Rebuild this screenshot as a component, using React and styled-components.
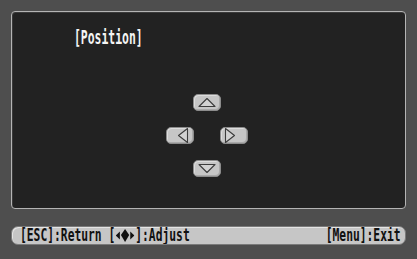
import React from "react";
import styled, { createGlobalStyle } from "styled-components";

const GlobalStyle = createGlobalStyle`
  html, body {
    margin: 0;
    padding: 0;
    background: #4e4e4e;
  }
`;

const Screen = styled.div`
  width: 417px;
  height: 259px;
  box-sizing: border-box;
  padding: 11px 11px 0 11px;
  background: #4e4e4e;
  display: flex;
  flex-direction: column;
  overflow: hidden;
`;

const Panel = styled.div`
  height: 198px;
  box-sizing: border-box;
  background: #222222;
  border: 1px solid #b4b4b4;
  border-radius: 4px;
  box-shadow: inset 1px 1px 0 #3a3a3a;
  padding: 15px 0 0 62px;
  display: flex;
  flex-direction: column;
`;

const Title = styled.h1`
  margin: 0;
  align-self: flex-start;
  font: bold 20px/20px "DejaVu Sans Mono", monospace;
  color: #f4f4f4;
  transform: scaleX(0.57);
  transform-origin: left top;
`;

const Pad = styled.div`
  align-self: center;
  margin: 47px 66px 0 0;
  display: grid;
  grid-template-columns: 27px 27px 27px;
  grid-template-rows: 17px 17px 17px;
  column-gap: 0;
  row-gap: 16px;
`;

const Key = styled.div`
  grid-column: ${(p) => p.col};
  grid-row: ${(p) => p.row};
  width: 28px;
  height: 17px;
  box-sizing: border-box;
  background: #c6c6c6;
  border: 1px solid #8c8c8c;
  border-radius: 5px;
  box-shadow: inset 1px 1px 0 #dcdcdc, inset -1px -1px 0 #a8a8a8;
  display: flex;
  align-items: center;
  justify-content: center;
`;

const Footer = styled.div`
  margin-top: 17px;
  height: 19px;
  box-sizing: border-box;
  background: #c6c6c6;
  border: 1px solid #7a7a7a;
  border-radius: 7px;
  box-shadow: inset 1px 1px 0 #e4e4e4;
  padding: 0 4px 0 8px;
  display: flex;
  align-items: center;
  justify-content: space-between;
  overflow: hidden;
`;

const Hint = styled.span`
  display: inline-flex;
  align-items: center;
  white-space: pre;
  font: bold 17px/17px "DejaVu Sans Mono", monospace;
  color: #111;
  transform: scaleX(0.665);
  transform-origin: ${(p) => (p.right ? "right center" : "left center")};
`;

function Arrow({ dir }) {
  let points;
  if (dir === "up") points = "14,4.5 22,12.5 6,12.5";
  if (dir === "down") points = "14,12.5 22,4.5 6,4.5";
  if (dir === "left") points = "12.5,8.5 21.5,1.5 21.5,15.5";
  if (dir === "right") points = "14.5,8.5 5.5,1.5 5.5,15.5";
  return (
    <svg width="28" height="17" viewBox="0 0 28 17" style={{ margin: "-1px" }}>
      <polygon
        points={points}
        fill="#d2d2d2"
        stroke="#3c3c3c"
        strokeWidth="1.1"
        strokeLinejoin="round"
      />
    </svg>
  );
}

function AdjustGlyph() {
  return (
    <svg
      width="28"
      height="13"
      viewBox="0 0 18 13"
      preserveAspectRatio="none"
      style={{ margin: "0 1px" }}
    >
      <polygon points="0,6.5 4,2.5 4,10.5" fill="#111" />
      <polygon points="9,0 13,6 9,13 5,6" fill="#111" />
      <polygon points="18,6.5 14,2.5 14,10.5" fill="#111" />
    </svg>
  );
}

export default function App() {
  return (
    <>
      <GlobalStyle />
      <Screen>
        <Panel>
          <Title>[Position]</Title>
          <Pad>
            <Key col={2} row={1}>
              <Arrow dir="up" />
            </Key>
            <Key col={1} row={2}>
              <Arrow dir="left" />
            </Key>
            <Key col={3} row={2}>
              <Arrow dir="right" />
            </Key>
            <Key col={2} row={3}>
              <Arrow dir="down" />
            </Key>
          </Pad>
        </Panel>
        <Footer>
          <Hint>
            [ESC]:Return [<AdjustGlyph />]:Adjust
          </Hint>
          <Hint right>[Menu]:Exit</Hint>
        </Footer>
      </Screen>
    </>
  );
}
